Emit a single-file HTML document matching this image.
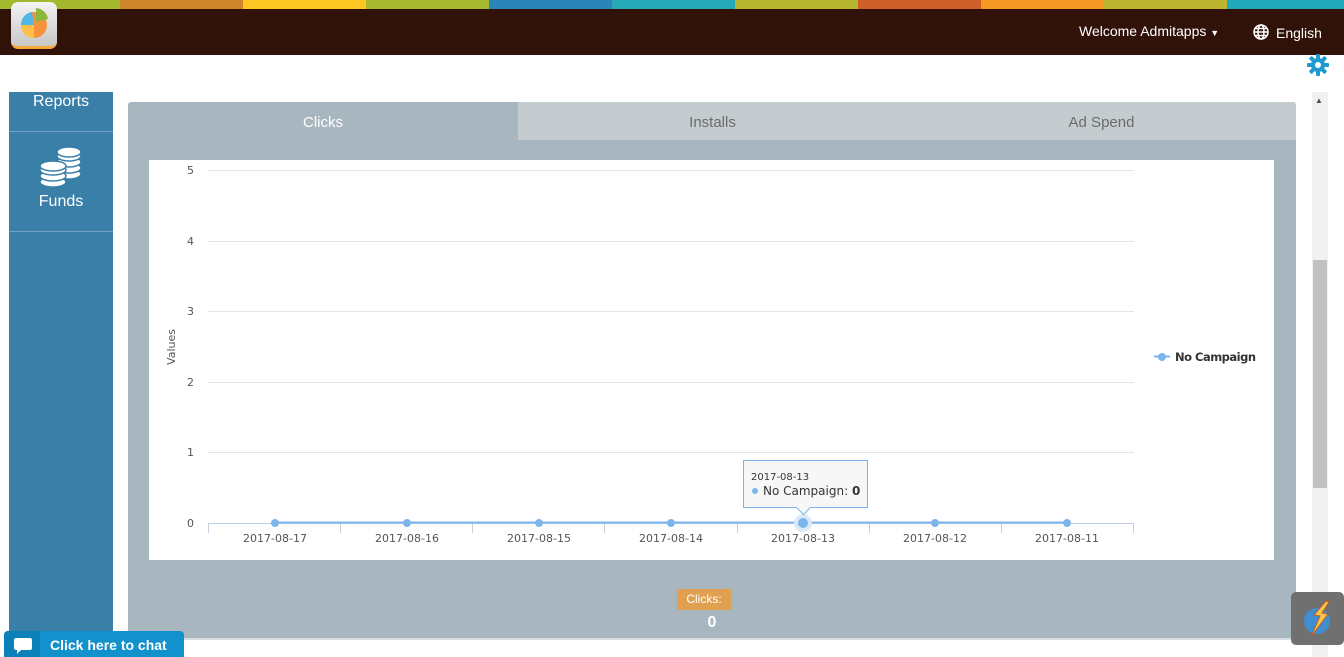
<!DOCTYPE html>
<html><head><meta charset="utf-8"><style>
*{margin:0;padding:0;box-sizing:border-box}
body{width:1344px;height:657px;overflow:hidden;background:#fff;font-family:"Liberation Sans",sans-serif;position:relative}
.a{position:absolute}
</style></head><body>
<div class="a" style="left:0;top:0;width:1344px;height:9px;display:flex">
<div style="width:120px;background:#a3b82c"></div><div style="width:123px;background:#cf862a"></div><div style="width:123px;background:#fdc823"></div><div style="width:123px;background:#a7b92e"></div><div style="width:123px;background:#2a86b8"></div><div style="width:123px;background:#25a8b8"></div><div style="width:123px;background:#b5b52e"></div><div style="width:123px;background:#d0602a"></div><div style="width:123px;background:#f79a25"></div><div style="width:123px;background:#bcb530"></div><div style="width:117px;background:#22a8bb"></div>
</div>
<div class="a" style="left:0;top:9px;width:1344px;height:46px;background:#311209"></div>
<div class="a" style="left:11px;top:2px;width:46px;height:47px;border-radius:7px;background:linear-gradient(#f4f4f4,#c8c8c8);border-bottom:3px solid #f4a93a">
<svg width="46" height="44" viewBox="0 0 46 44"><circle cx="23" cy="23" r="13" fill="#f7923a"/><path d="M23 23 L10 23 A13 13 0 0 0 23 36 Z" fill="#fdc14a"/><path d="M23 23 L10 23 A13 13 0 0 1 21 10 Z" fill="#4fb6e6"/><path d="M25 20 L25 6 A13 13 0 0 1 37 17 Z" fill="#8db83a"/></svg></div>
<div class="a" style="left:1079px;top:23px;color:#fff;font-size:14px">Welcome Admitapps <span style="font-size:9px">▼</span></div>
<svg class="a" style="left:1253px;top:24px" width="16" height="16" viewBox="0 0 16 16" fill="none" stroke="#fff" stroke-width="1.5"><circle cx="8" cy="8" r="7"/><ellipse cx="8" cy="8" rx="3" ry="7"/><path d="M1 8h14M2 4.5h12M2 11.5h12"/></svg>
<div class="a" style="left:1276px;top:25px;color:#fff;font-size:14px">English</div>
<svg class="a" style="left:1307px;top:54px" width="22" height="22" viewBox="0 0 22 22"><g fill="#1e9ad0"><circle cx="11" cy="11" r="7"/><rect x="9" y="0" width="4" height="22" rx="1"/><rect x="9" y="0" width="4" height="22" rx="1" transform="rotate(45 11 11)"/><rect x="9" y="0" width="4" height="22" rx="1" transform="rotate(90 11 11)"/><rect x="9" y="0" width="4" height="22" rx="1" transform="rotate(135 11 11)"/></g><circle cx="11" cy="11" r="3" fill="#fff"/></svg>
<div class="a" style="left:1312px;top:92px;width:16px;height:565px;background:#f0f0f0"></div>
<div class="a" style="left:1313px;top:260px;width:14px;height:228px;background:#c1c1c1"></div>
<div class="a" style="left:1315px;top:96px;font-size:8px;color:#505050">▲</div>
<div class="a" style="left:9px;top:92px;width:104px;height:548px;background:#3a7fa8"></div>
<div class="a" style="left:9px;top:93px;width:104px;text-align:center;color:#fff;font-size:16px">Reports</div>
<div class="a" style="left:9px;top:131px;width:104px;height:1px;background:#6fa2c3"></div>
<svg class="a" style="left:38px;top:145px" width="46" height="44" viewBox="0 0 46 44" fill="#fff" stroke="#3a7fa8" stroke-width="1.5"><ellipse cx="31" cy="29" rx="12" ry="5"/><ellipse cx="31" cy="23" rx="12" ry="5"/><ellipse cx="31" cy="17" rx="12" ry="5"/><ellipse cx="31" cy="11" rx="12" ry="5"/><ellipse cx="31" cy="7" rx="12" ry="5"/><ellipse cx="15" cy="37" rx="13" ry="5"/><ellipse cx="15" cy="31" rx="13" ry="5"/><ellipse cx="15" cy="25" rx="13" ry="5"/><ellipse cx="15" cy="21" rx="13" ry="5"/></svg>
<div class="a" style="left:9px;top:193px;width:104px;text-align:center;color:#fff;font-size:16px">Funds</div>
<div class="a" style="left:9px;top:231px;width:104px;height:1px;background:#6fa2c3"></div>
<div class="a" style="left:128px;top:102px;width:1168px;height:538px;background:#a8b7bf;border-radius:3px;border-bottom:2px solid #d6dcdf"></div>
<div class="a" style="left:518px;top:102px;width:778px;height:38px;background:#c4cccf;border-radius:0 3px 0 0"></div>
<div class="a" style="left:128px;top:114px;width:390px;text-align:center;color:#fff;font-size:15px">Clicks</div>
<div class="a" style="left:518px;top:114px;width:389px;text-align:center;color:#6b6b6b;font-size:15px">Installs</div>
<div class="a" style="left:907px;top:114px;width:389px;text-align:center;color:#6b6b6b;font-size:15px">Ad Spend</div>
<div class="a" style="left:149px;top:160px;width:1125px;height:400px;background:#fff"></div>
<svg class="a" style="left:0;top:0" width="1344" height="657" font-family="DejaVu Sans, sans-serif" font-size="11" fill="#555">
<g stroke="#e6e6e6"><line x1="208" x2="1134" y1="170.5" y2="170.5"/><line x1="208" x2="1134" y1="241.5" y2="241.5"/><line x1="208" x2="1134" y1="311.5" y2="311.5"/><line x1="208" x2="1134" y1="382.5" y2="382.5"/><line x1="208" x2="1134" y1="452.5" y2="452.5"/></g>
<g text-anchor="end"><text x="194" y="174">5</text><text x="194" y="245">4</text><text x="194" y="315">3</text><text x="194" y="386">2</text><text x="194" y="456">1</text><text x="194" y="527">0</text></g>
<text transform="translate(175,347) rotate(-90)" text-anchor="middle">Values</text>
<g stroke="#c0d0e0"><line x1="208" x2="1134" y1="523.5" y2="523.5"/><line x1="208.5" x2="208.5" y1="523" y2="533"/><line x1="340.5" x2="340.5" y1="523" y2="533"/><line x1="472.5" x2="472.5" y1="523" y2="533"/><line x1="604.5" x2="604.5" y1="523" y2="533"/><line x1="737.5" x2="737.5" y1="523" y2="533"/><line x1="869.5" x2="869.5" y1="523" y2="533"/><line x1="1001.5" x2="1001.5" y1="523" y2="533"/><line x1="1133.5" x2="1133.5" y1="523" y2="533"/></g>
<line x1="275" x2="1067" y1="522.5" y2="522.5" stroke="#7cb5ec" stroke-width="2"/>
<g fill="#7cb5ec"><circle cx="275" cy="523" r="4"/><circle cx="407" cy="523" r="4"/><circle cx="539" cy="523" r="4"/><circle cx="671" cy="523" r="4"/><circle cx="803" cy="523" r="9" fill="#dbe9f8"/><circle cx="803" cy="523" r="5"/><circle cx="935" cy="523" r="4"/><circle cx="1067" cy="523" r="4"/></g>
<g text-anchor="middle" fill="#555"><text x="275" y="542">2017-08-17</text><text x="407" y="542">2017-08-16</text><text x="539" y="542">2017-08-15</text><text x="671" y="542">2017-08-14</text><text x="803" y="542">2017-08-13</text><text x="935" y="542">2017-08-12</text><text x="1067" y="542">2017-08-11</text></g>
<path d="M743.5 460.5h124v47h-57l-7 7-7-7h-53z" fill="#f7f7f7" stroke="#7cb5ec"/>
<text x="751" y="480" font-size="10" fill="#333">2017-08-13</text>
<circle cx="755" cy="491" r="3" fill="#7cb5ec"/>
<text x="763" y="495" font-size="12" fill="#333">No Campaign: <tspan font-weight="bold">0</tspan></text>
<line x1="1154" x2="1170" y1="356.5" y2="356.5" stroke="#7cb5ec" stroke-width="2"/><circle cx="1162" cy="357" r="4" fill="#7cb5ec"/>
<text x="1175" y="361" font-size="11.5" font-weight="bold" fill="#333" textLength="81">No Campaign</text>
</svg>
<div class="a" style="left:677px;top:589px;width:54px;height:21px;background:#e0a050;color:#fff;font-size:12px;text-align:center;line-height:21px">Clicks:</div>
<div class="a" style="left:677px;top:614px;width:70px;text-align:center;color:#fff;font-size:16px;font-weight:bold">0</div>
<div class="a" style="left:4px;top:631px;width:180px;height:26px;background:#1391cc;border-radius:4px 4px 0 0"></div>
<div class="a" style="left:4px;top:631px;width:36px;height:26px;background:#0c80b8;border-radius:4px 0 0 0"></div>
<svg class="a" style="left:13px;top:637px" width="20" height="18" viewBox="0 0 20 18"><path d="M3 1h14a2 2 0 0 1 2 2v8a2 2 0 0 1-2 2H8l-4 4v-4H3a2 2 0 0 1-2-2V3a2 2 0 0 1 2-2z" fill="#fff"/></svg>
<div class="a" style="left:50px;top:637px;color:#fff;font-size:14px;font-weight:bold">Click here to chat</div>
<div class="a" style="left:1291px;top:592px;width:53px;height:53px;background:#707070;border-radius:5px"></div>
<svg class="a" style="left:1302px;top:600px" width="34" height="40" viewBox="0 0 34 40"><circle cx="15" cy="21" r="13" fill="#3f8ed0"/><path d="M24 1 L12 15 L18 16 L9 37 L26 14 L20 13 L27 2z" fill="#f4c84a" stroke="#c05a2a" stroke-width="1"/></svg>
</body></html>
